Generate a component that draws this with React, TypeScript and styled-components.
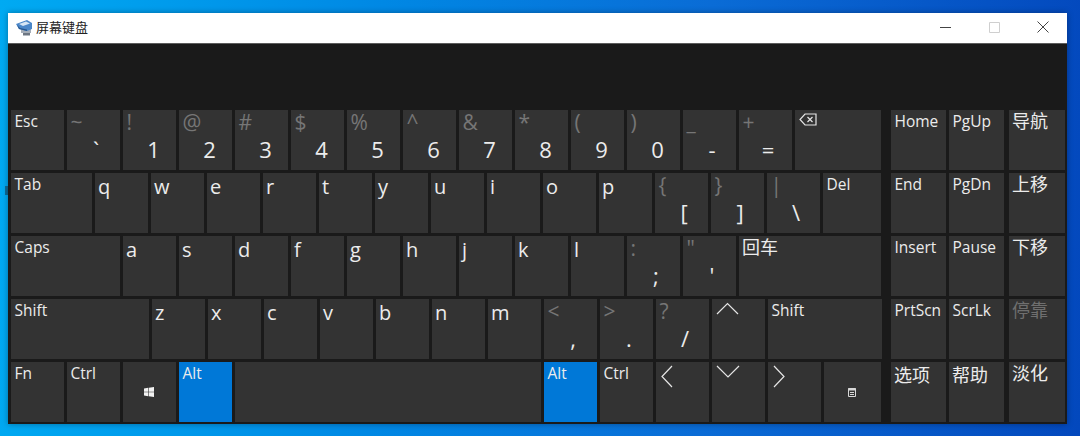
import React from "react";
import styled, { createGlobalStyle } from "styled-components";

const Global = createGlobalStyle`
  html, body {
    margin: 0;
    padding: 0;
    width: 1080px;
    height: 436px;
    overflow: hidden;
  }
`;

type KeyData = {
  text?: string;
  letter?: string;
  top?: string;
  sub?: string;
  icon?: React.ReactNode;
  w?: number;
  on?: boolean;
  dim?: boolean;
  cjk?: boolean;
  low?: boolean;
};

const Stroke = ({ w, h, d }: { w: number; h: number; d: string }) => (
  <svg width={w} height={h} viewBox={`0 0 ${w} ${h}`} fill="none" stroke="#e6e6e6" strokeWidth="1.2">
    <path d={d} />
  </svg>
);

const BackIcon = () => (
  <svg width="18" height="13" viewBox="0 0 18 13" fill="none" stroke="#e6e6e6" strokeWidth="1.2">
    <path d="M17 1H6L1 6.5 6 12h11z" />
    <path d="M8.5 4l5 5M13.5 4l-5 5" />
  </svg>
);

const WinIcon = () => (
  <svg width="10" height="10" viewBox="0 0 10 10" fill="#f2f2f2">
    <path d="M0 1.4 4.2.8v3.9H0zM4.8.7 10 0v4.7H4.8zM0 5.3h4.2v3.9L0 8.6zM4.8 5.3H10V10l-5.2-.7z" />
  </svg>
);

const MenuIcon = () => (
  <svg width="8" height="10" viewBox="0 0 8 10" fill="none" stroke="#d8d8d8" strokeWidth="1">
    <path d="M.5 1.5h7v8h-7z" />
    <path d="M0 2.5h8" strokeWidth="2" />
    <path d="M2 5.5h4M2 7.5h4" />
  </svg>
);

const KeyboardLogo = () => (
  <svg width="17" height="16" viewBox="0 0 17 16">
    <path d="M5 9h10v4H5z" fill="#a4adb8" />
    <path d="M7 13h7v2.500H7z" fill="#6d7682" />
    <path d="M0 4 11 0l5 3v6l-5 2L3 9z" fill="#4a86c8" />
    <path d="M3 4l7-2.500L14 3.500 7 6z" fill="#d6e5f4" />
    <path d="M1 5l3 3 7 1.500V11L3 9z" fill="#27558c" />
  </svg>
);

const rows: KeyData[][] = [
  [
    { text: "Esc" },
    { top: "~", sub: "`" },
    { top: "!", sub: "1" },
    { top: "@", sub: "2" },
    { top: "#", sub: "3" },
    { top: "$", sub: "4" },
    { top: "%", sub: "5" },
    { top: "^", sub: "6" },
    { top: "&", sub: "7" },
    { top: "*", sub: "8" },
    { top: "(", sub: "9" },
    { top: ")", sub: "0" },
    { top: "_", sub: "-" },
    { top: "+", sub: "=" },
    { icon: <BackIcon />, w: 86 },
  ],
  [
    { text: "Tab", w: 81 },
    ...["q", "w", "e", "r", "t", "y", "u", "i", "o", "p"].map((letter) => ({ letter })),
    { top: "{", sub: "[" },
    { top: "}", sub: "]" },
    { top: "|", sub: "\\" },
    { text: "Del", w: 58 },
  ],
  [
    { text: "Caps", w: 109 },
    ...["a", "s", "d", "f", "g", "h", "j", "k", "l"].map((letter) => ({ letter })),
    { top: ":", sub: ";" },
    { top: '"', sub: "'" },
    { text: "回车", w: 142, cjk: true },
  ],
  [
    { text: "Shift", w: 138 },
    ...["z", "x", "c", "v", "b", "n", "m"].map((letter) => ({ letter })),
    { top: "<", sub: "," },
    { top: ">", sub: "." },
    { top: "?", sub: "/" },
    { icon: <Stroke w={23} h={13} d="M1 12 11.500 1.500 22 12" /> },
    { text: "Shift", w: 114 },
  ],
  [
    { text: "Fn" },
    { text: "Ctrl" },
    { sub: "win" },
    { text: "Alt", on: true },
    { w: 306 },
    { text: "Alt", on: true },
    { text: "Ctrl" },
    { icon: <Stroke w={14} h={23} d="M12 1 2 11.500 12 22" /> },
    { icon: <Stroke w={24} h={13} d="M1 1l11 11L23 1" /> },
    { icon: <Stroke w={14} h={23} d="M2 1l10 10.500L2 22" /> },
    { sub: "menu", w: 57 },
  ],
];

const navRows: KeyData[][] = [
  [{ text: "Home" }, { text: "PgUp" }, { text: "导航", cjk: true }],
  [{ text: "End" }, { text: "PgDn" }, { text: "上移", cjk: true }],
  [{ text: "Insert" }, { text: "Pause" }, { text: "下移", cjk: true }],
  [{ text: "PrtScn" }, { text: "ScrLk" }, { text: "停靠", cjk: true, dim: true }],
  [
    { text: "选项", cjk: true, low: true },
    { text: "帮助", cjk: true, low: true },
    { text: "淡化", cjk: true },
  ],
];

const KeyBody = ({ k }: { k: KeyData }) => {
  if (k.sub === "win")
    return (
      <Glyph>
        <WinIcon />
      </Glyph>
    );
  if (k.sub === "menu")
    return (
      <Glyph $x={20.5}>
        <MenuIcon />
      </Glyph>
    );
  return (
    <>
      {k.text && (
        <Label $cjk={k.cjk} $dim={k.dim} $low={k.low}>
          {k.text}
        </Label>
      )}
      {k.letter && <Letter>{k.letter}</Letter>}
      {k.icon && <IconSlot>{k.icon}</IconSlot>}
      {k.top && <TopLabel>{k.top}</TopLabel>}
      {k.sub && <SubLabel $digit={/\d/.test(k.sub)}>{k.sub}</SubLabel>}
    </>
  );
};

export default function App() {
  return (
    <Desktop>
      <Global />
      <IconScrap />
      <Win>
        <TitleBar>
          <KeyboardLogo />
          <Title>屏幕键盘</Title>
          <Controls>
            <CtrlBtn>
              <svg width="11" height="11" viewBox="0 0 11 11" stroke="#444" fill="none">
                <path d="M0 5.500h11" />
              </svg>
            </CtrlBtn>
            <CtrlBtn>
              <svg width="11" height="11" viewBox="0 0 11 11" stroke="#cfcfcf" fill="none">
                <path d="M.5.500h10v10H.5z" />
              </svg>
            </CtrlBtn>
            <CtrlBtn>
              <svg width="12" height="12" viewBox="0 0 12 12" stroke="#444" fill="none">
                <path d="M.5.500l11 11M11.500.500l-11 11" />
              </svg>
            </CtrlBtn>
          </Controls>
        </TitleBar>
        <Panel>
          <Board>
            <MainKeys>
              {rows.map((row, i) => (
                <Row key={i}>
                  {row.map((k, j) => (
                    <Key key={j} $w={k.w ?? 53} $on={k.on}>
                      <KeyBody k={k} />
                    </Key>
                  ))}
                </Row>
              ))}
            </MainKeys>
            <NavKeys>
              {navRows.map((row, i) => (
                <Row key={i}>
                  {row.map((k, j) => (
                    <Key key={j} $w={j === 2 ? 56 : 55} $side={j === 2}>
                      <KeyBody k={k} />
                    </Key>
                  ))}
                </Row>
              ))}
            </NavKeys>
          </Board>
        </Panel>
      </Win>
    </Desktop>
  );
}

const Desktop = styled.div`
  position: relative;
  width: 1080px;
  height: 436px;
  box-sizing: border-box;
  padding: 13px 0 0 8px;
  background: linear-gradient(92deg, #00aaf2 0%, #0088e4 35%, #0a6cd6 65%, #0348bd 100%);
`;

/* scrap of a desktop icon's caption that shows beside the window */
const IconScrap = styled.div`
  position: absolute;
  left: 5px;
  top: 186px;
  width: 3px;
  height: 9px;
  background: #12506f;
  opacity: 0.7;
`;

const Win = styled.div`
  position: relative;
  width: 1059px;
  height: 411px;
  display: flex;
  flex-direction: column;
  box-shadow: 0 0 6px rgba(0, 0, 0, 0.35);
`;

const TitleBar = styled.div`
  height: 30px;
  flex: none;
  box-sizing: content-box;
  background: #fff;
  border-bottom: 1px solid #5c5c5c;
  display: flex;
  align-items: center;
  padding: 0 0 0 8px;
  font-family: "Noto Sans CJK SC", "Noto Sans", sans-serif;
`;

const Title = styled.div`
  margin: 0 0 3px 3px;
  font-size: 13px;
  line-height: 20px;
  color: #222;
`;

const Controls = styled.div`
  margin: 0 0 0 auto;
  display: flex;
  gap: 1px;
`;

const CtrlBtn = styled.div`
  width: 48px;
  height: 28px;
  margin-bottom: 2px;
  display: flex;
  align-items: center;
  justify-content: center;
`;

const Panel = styled.div`
  flex: 1;
  background: #1a1a1a;
  padding: 66px 2px 2px 3px;
  display: flex;
`;

const Board = styled.div`
  display: flex;
  gap: 10px;
`;

const MainKeys = styled.div`
  display: flex;
  flex-direction: column;
  gap: 3px;
  width: 870px;
`;

const NavKeys = styled(MainKeys)`
  width: 174px;
`;

const Row = styled.div`
  display: flex;
  gap: 3px;
  height: 60px;
`;

const Key = styled.div<{ $w: number; $on?: boolean; $side?: boolean }>`
  width: ${({ $w }) => $w}px;
  margin-left: ${({ $side }) => ($side ? "2px" : "0")};
  flex: none;
  box-sizing: border-box;
  padding: 0 3.5px;
  display: flex;
  flex-direction: column;
  background: ${({ $on }) => ($on ? "#0078d7" : "#333333")};
  color: #ececec;
  font-family: "Open Sans", "Noto Sans", sans-serif;
`;

const Label = styled.div<{ $cjk?: boolean; $dim?: boolean; $low?: boolean }>`
  font-size: ${({ $cjk }) => ($cjk ? "18px" : "15.5px")};
  line-height: ${({ $cjk }) => ($cjk ? "20px" : "22px")};
  margin-top: ${({ $low }) => ($low ? "2px" : "0")};
  margin-left: ${({ $cjk }) => ($cjk ? "-0.5px" : "0")};
  white-space: nowrap;
  color: ${({ $dim }) => ($dim ? "#6f6f6f" : "inherit")};
  font-family: ${({ $cjk }) => ($cjk ? '"Noto Sans CJK SC", sans-serif' : "inherit")};
`;

const Letter = styled.div`
  font-size: 20px;
  line-height: 27px;
  margin-left: -0.5px;
`;

const TopLabel = styled.div`
  font-size: 21px;
  line-height: 25px;
  color: #767676;
`;

const SubLabel = styled.div<{ $digit?: boolean }>`
  margin-top: auto;
  margin-bottom: 8px;
  margin-left: ${({ $digit }) => ($digit ? "19px" : "17.5px")};
  width: 16px;
  text-align: center;
  font-size: 22px;
  line-height: 28px;
`;

const IconSlot = styled.div`
  display: flex;
  margin-top: 3px;
`;

const Glyph = styled.div<{ $x?: number }>`
  margin-top: 25px;
  margin-left: ${({ $x }) => $x ?? 17.5}px;
  display: flex;
`;
